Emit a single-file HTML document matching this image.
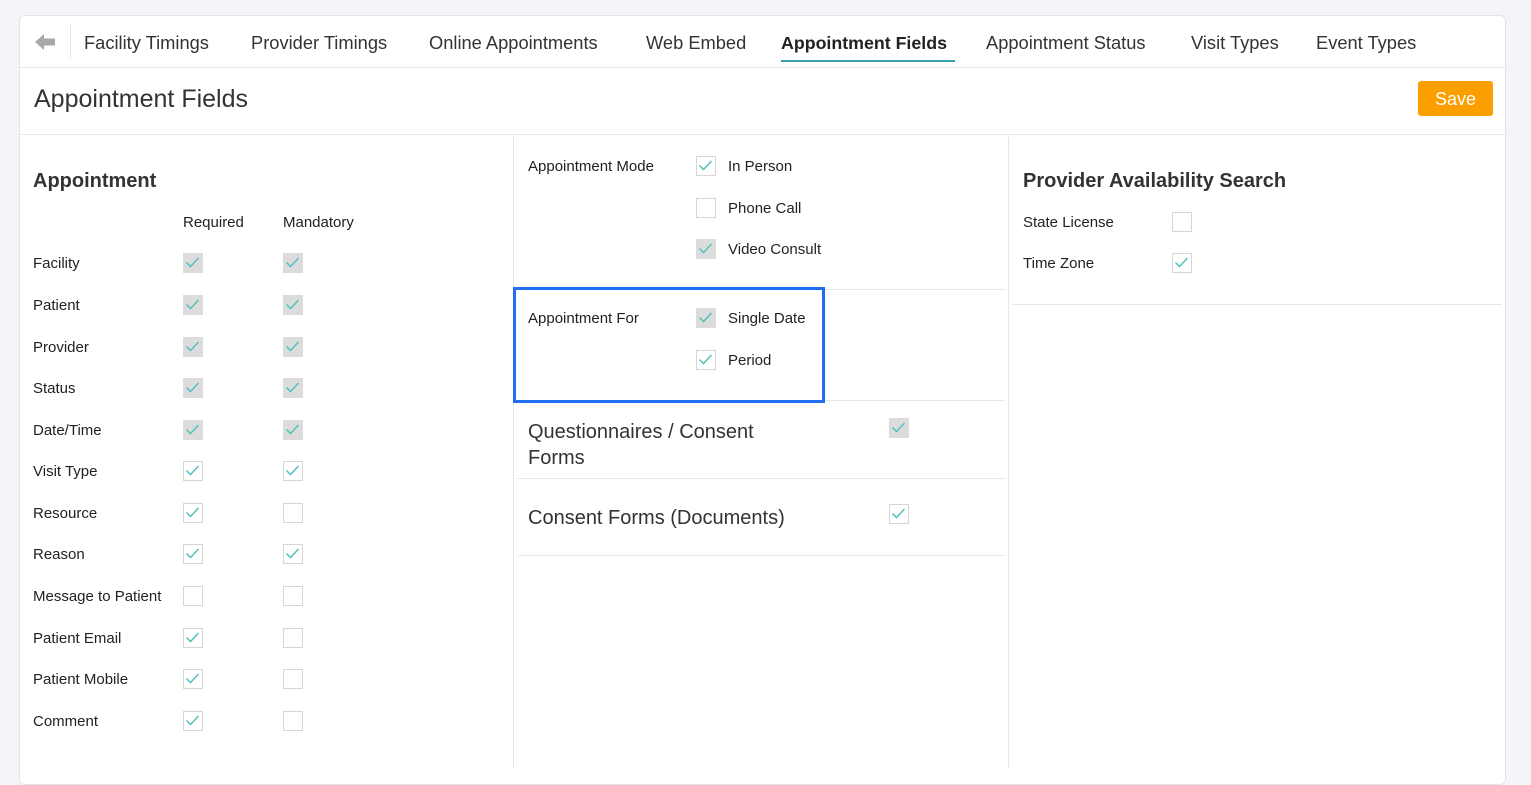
<!DOCTYPE html>
<html><head><meta charset="utf-8"><style>
*{margin:0;padding:0;box-sizing:border-box}
body{width:1531px;height:768px;background:#f4f5f8;font-family:"Liberation Sans",sans-serif;color:#222;position:relative;overflow:hidden}
.card{position:absolute;left:19px;top:15px;width:1487px;height:770px;background:#fff;border:1px solid #e2e4e8;border-radius:6px}
.t{position:absolute;white-space:nowrap;line-height:20px}
.tab{font-size:18.3px;color:#333;top:33px}
.l{font-size:15px;color:#222}
.h{position:absolute;background:#e6e6e6;height:1px}
.v{position:absolute;background:#e6e6e6;width:1px}
.cb{position:absolute;width:20px;height:20px;border:1px solid #d6d6d6;background:#fff}
.cb.g{background:#dcdcdc;border-color:#dcdcdc}
.cb svg{position:absolute;left:-1px;top:-1px}
</style></head><body>
<div class="card"></div>
<svg style="position:absolute;left:34px;top:32px" width="22" height="20" viewBox="0 0 22 20"><path d="M1 10 L10 2 L10 6.5 L21 6.5 L21 13.5 L10 13.5 L10 18 Z" fill="#a9a9a9"/></svg>
<div class="v" style="left:70px;top:25px;height:33px"></div>
<div class="t tab" style="left:84px">Facility Timings</div>
<div class="t tab" style="left:251px">Provider Timings</div>
<div class="t tab" style="left:429px">Online Appointments</div>
<div class="t tab" style="left:646px">Web Embed</div>
<div class="t tab" style="left:781px;font-weight:bold;color:#222;font-size:17.8px">Appointment Fields</div>
<div style="position:absolute;left:781px;top:60px;width:174px;height:2px;background:#3a9fb0"></div>
<div class="t tab" style="left:986px">Appointment Status</div>
<div class="t tab" style="left:1191px">Visit Types</div>
<div class="t tab" style="left:1316px">Event Types</div>
<div class="h" style="left:20px;top:67px;width:1485px"></div>
<div class="t" style="left:34px;top:84px;font-size:25px;line-height:30px;color:#333">Appointment Fields</div>
<div style="position:absolute;left:1418px;top:81px;width:75px;height:35px;background:#fb9f00;border-radius:3px;color:#fff;font-size:18px;line-height:36px;text-align:center">Save</div>
<div class="h" style="left:20px;top:134px;width:1485px"></div>
<div class="v" style="left:513px;top:137px;height:631px"></div>
<div class="v" style="left:1008px;top:137px;height:631px"></div>

<div class="t" style="left:33px;top:169px;font-size:20px;font-weight:bold;line-height:24px;color:#333">Appointment</div>
<div class="t l" style="left:183px;top:213px">Required</div>
<div class="t l" style="left:283px;top:213px">Mandatory</div>

<div class="t l" style="left:528px;top:157px">Appointment Mode</div>
<div class="t l" style="left:728px;top:157px">In Person</div>
<div class="t l" style="left:728px;top:199px">Phone Call</div>
<div class="t l" style="left:728px;top:240px">Video Consult</div>
<div class="h" style="left:517px;top:289px;width:488px"></div>
<div class="t l" style="left:528px;top:309px">Appointment For</div>
<div class="t l" style="left:728px;top:309px">Single Date</div>
<div class="t l" style="left:728px;top:351px">Period</div>
<div class="h" style="left:517px;top:400px;width:488px"></div>
<div class="t" style="left:528px;top:419px;font-size:20px;line-height:26px;color:#333">Questionnaires / Consent<br>Forms</div>
<div class="h" style="left:517px;top:478px;width:488px"></div>
<div class="t" style="left:528px;top:505px;font-size:20px;line-height:26px;color:#333">Consent Forms (Documents)</div>
<div class="h" style="left:517px;top:555px;width:488px"></div>
<div style="position:absolute;left:513px;top:287px;width:312px;height:116px;border:3px solid #1f6ef0"></div>

<div class="t" style="left:1023px;top:169px;font-size:20px;font-weight:bold;line-height:24px;color:#333">Provider Availability Search</div>
<div class="t l" style="left:1023px;top:213px">State License</div>
<div class="t l" style="left:1023px;top:254px">Time Zone</div>
<div class="h" style="left:1012px;top:304px;width:490px"></div>

<script>
function cb(x,y,s){var d=document.createElement('div');d.className='cb'+(s=='g'?' g':'');d.style.left=x+'px';d.style.top=(y-10)+'px';
if(s){d.innerHTML='<svg width="20" height="20" viewBox="0 0 20 20"><path d="M3.5 9.5 L7.5 13.5 L15.5 5" fill="none" stroke="#52c2bd" stroke-width="1.5"/></svg>';}
document.body.appendChild(d);}
function lbl(x,y,t){var d=document.createElement('div');d.className='t l';d.style.left=x+'px';d.style.top=(y-9)+'px';d.textContent=t;document.body.appendChild(d);}
var R=[["Facility",263,'g','g'],["Patient",305,'g','g'],["Provider",347,'g','g'],["Status",388,'g','g'],["Date/Time",430,'g','g'],["Visit Type",471,'c','c'],["Resource",513,'c',''],["Reason",554,'c','c'],["Message to Patient",596,'',''],["Patient Email",638,'c',''],["Patient Mobile",679,'c',''],["Comment",721,'c','']];
R.forEach(function(r){lbl(33,r[1],r[0]);cb(183,r[1],r[2]);cb(283,r[1],r[3]);});
cb(696,166,'c');cb(696,208,'');cb(696,249,'g');cb(696,318,'g');cb(696,360,'c');
cb(889,428,'g');cb(889,514,'c');
cb(1172,222,'');cb(1172,263,'c');
</script>
</body></html>
